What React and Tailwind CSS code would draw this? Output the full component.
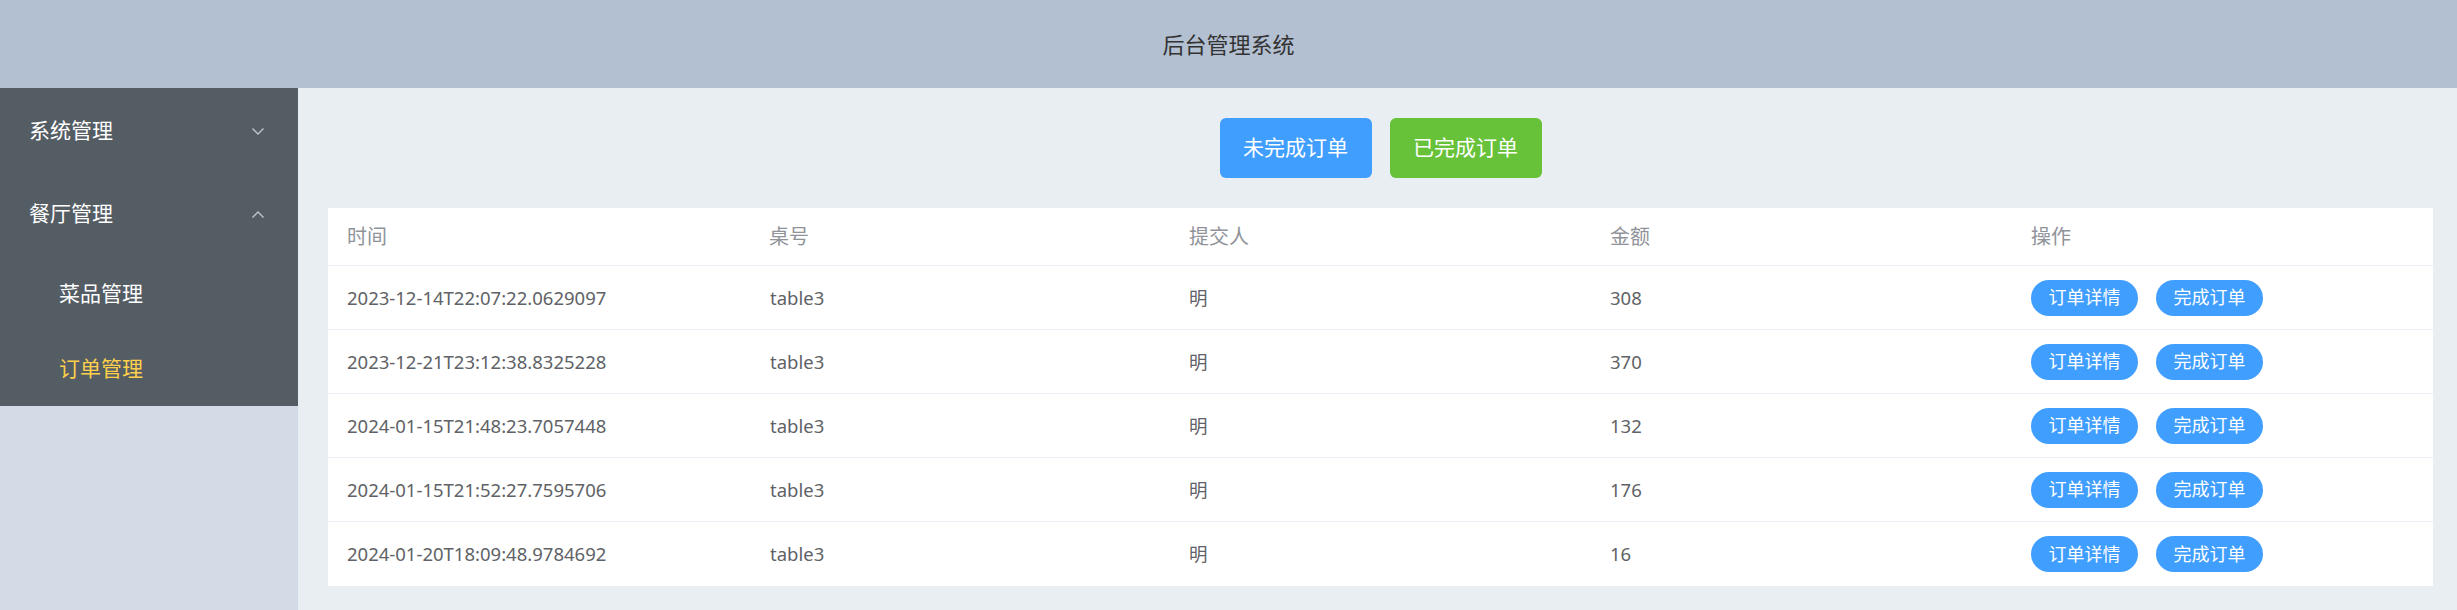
import React from 'react';

const ORDERS = [
  { time: '2023-12-14T22:07:22.0629097', table: 'table3', user: '明', amount: '308' },
  { time: '2023-12-21T23:12:38.8325228', table: 'table3', user: '明', amount: '370' },
  { time: '2024-01-15T21:48:23.7057448', table: 'table3', user: '明', amount: '132' },
  { time: '2024-01-15T21:52:27.7595706', table: 'table3', user: '明', amount: '176' },
  { time: '2024-01-20T18:09:48.9784692', table: 'table3', user: '明', amount: '16' },
];

const FONT = { fontFamily: '"Noto Sans", "Noto Sans CJK SC", sans-serif' };

function Chevron({ up = false }) {
  return (
    <svg width="12" height="7" viewBox="0 0 12 7" fill="none" className="shrink-0">
      {up ? (
        <polyline points="0.5,6.5 6,1 11.5,6.5" stroke="#c0c4cc" strokeWidth="1.4" />
      ) : (
        <polyline points="0.5,0.5 6,6 11.5,0.5" stroke="#c0c4cc" strokeWidth="1.4" />
      )}
    </svg>
  );
}

export default function App() {
  return (
    <div className="flex flex-col h-[610px] w-full" style={FONT}>
      {/* header */}
      <header className="h-[88px] shrink-0 bg-[#b3c0d1] flex items-center justify-center">
        <span className="text-[22px] text-[#333]">后台管理系统</span>
      </header>

      <div className="flex flex-1 min-h-0">
        {/* sidebar */}
        <aside className="w-[298px] shrink-0 bg-[#d3dce6]">
          <nav className="bg-[#545c64] text-white text-[21px]">
            <div className="h-[84px] flex items-center justify-between pl-[29px] pr-[34px] pt-[2px]">
              <span>系统管理</span>
              <Chevron />
            </div>
            <div className="h-[84px] flex items-center justify-between pl-[29px] pr-[34px]">
              <span>餐厅管理</span>
              <Chevron up />
            </div>
            <div className="h-[75px] flex items-center pl-[59px]">菜品管理</div>
            <div className="h-[75px] flex items-center pl-[59px] text-[#ffd04b]">订单管理</div>
          </nav>
        </aside>

        {/* main */}
        <main className="flex-1 bg-[#e9eef3] pt-[30px] pl-[30px] pr-[24px]">
          <div className="flex justify-center gap-[18px]">
            <button className="w-[152px] h-[60px] rounded-[6px] bg-[#409eff] text-white text-[21px]">
              未完成订单
            </button>
            <button className="w-[152px] h-[60px] rounded-[6px] bg-[#67c23a] text-white text-[21px]">
              已完成订单
            </button>
          </div>

          <div className="mt-[30px] bg-white">
            <div className="grid grid-cols-5 h-[58px] items-center border-b border-[#ebeef5] text-[#909399] text-[20px]">
              <div className="pl-[19px]">时间</div>
              <div className="pl-[20px]">桌号</div>
              <div className="pl-[19px]">提交人</div>
              <div className="pl-[19px]">金额</div>
              <div className="pl-[19px]">操作</div>
            </div>
            {ORDERS.map((o, i) => (
              <div
                key={i}
                className={`grid grid-cols-5 h-[64px] items-center text-[#606266] text-[18.5px] ${i < ORDERS.length - 1 ? 'border-b border-[#ebeef5]' : ''}`}
              >
                <div className="pl-[19px]">{o.time}</div>
                <div className="pl-[21px]">{o.table}</div>
                <div className="pl-[19px]">{o.user}</div>
                <div className="pl-[19px]">{o.amount}</div>
                <div className="pl-[19px] flex gap-[18px]">
                  <button className="w-[107px] h-[36px] rounded-full bg-[#409eff] text-white text-[18px]">订单详情</button>
                  <button className="w-[107px] h-[36px] rounded-full bg-[#409eff] text-white text-[18px]">完成订单</button>
                </div>
              </div>
            ))}
          </div>
        </main>
      </div>
    </div>
  );
}
